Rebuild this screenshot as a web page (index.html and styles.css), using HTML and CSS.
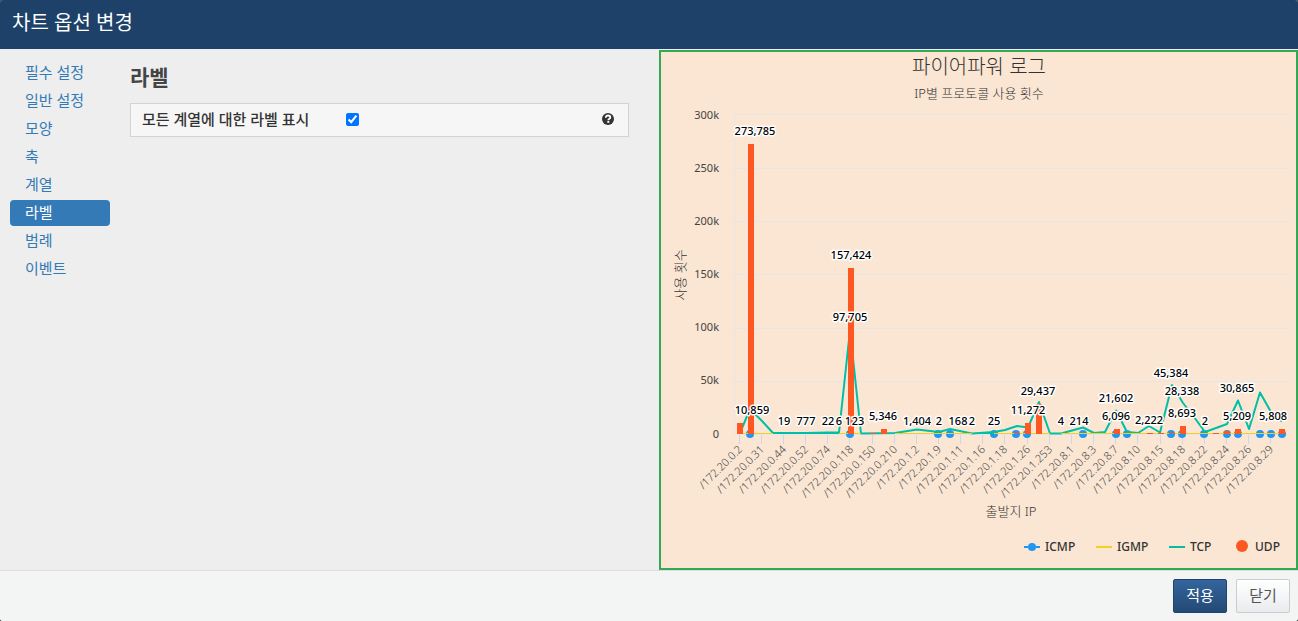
FILE: index.html
```html
<!DOCTYPE html>
<html lang="ko">
<head>
<meta charset="utf-8">
<title>차트 옵션 변경</title>
<link rel="stylesheet" href="styles.css">
</head>
<body>
<div class="dialog">
  <header class="dialog-header"><h1 class="dialog-title">차트 옵션 변경</h1></header>
  <main class="dialog-body">
    <div class="settings">
      <nav class="side-nav">
        <a class="nav-link" href="#required">필수 설정</a>
        <a class="nav-link" href="#general">일반 설정</a>
        <a class="nav-link" href="#shape">모양</a>
        <a class="nav-link" href="#axis">축</a>
        <a class="nav-link" href="#series">계열</a>
        <a class="nav-link active" href="#label" aria-current="page">라벨</a>
        <a class="nav-link" href="#legend">범례</a>
        <a class="nav-link" href="#event">이벤트</a>
      </nav>
      <section class="options">
        <h2 class="options-title">라벨</h2>
        <div class="option-row">
          <label class="option-label" for="show-labels">모든 계열에 대한 라벨 표시</label>
          <input class="option-check" id="show-labels" type="checkbox" checked>
          <button class="help" type="button" aria-label="도움말">
            <svg width="12" height="12" viewBox="0 0 12 12"><circle cx="6" cy="6" r="6" fill="#333"/><path d="M3.800 4.700C3.800 3.200 4.800 2.500 6.100 2.500C7.400 2.500 8.300 3.300 8.300 4.400C8.300 5.900 6.300 5.700 6.300 7.300" fill="none" stroke="#fff" stroke-width="1.800"/><rect x="5.300" y="8" width="2" height="1.800" fill="#fff"/></svg>
          </button>
        </div>
      </section>
    </div>
    <figure class="preview">
      <svg class="chart" viewBox="661 52 635 516" role="img" aria-label="파이어파워 로그">
        <text class="chart-title" x="979" y="74">파이어파워 로그</text>
        <text class="chart-subtitle" x="979" y="98">IP별 프로토콜 사용 횟수</text>

        <path class="grid" d="M734 114.500H1288M734 168.500H1288M734 221.500H1288M734 274.500H1288M734 328.500H1288M734 381.500H1288M734.500 114V434M734 434.500H1288"/>
        <path class="ticks" d="M739.500 435v9M761.500 435v9M783.500 435v9M805.500 435v9M827.500 435v9M849.500 435v9M872.500 435v9M894.500 435v9M916.500 435v9M938.500 435v9M960.500 435v9M982.500 435v9M1004.500 435v9M1027.500 435v9M1049.500 435v9M1071.500 435v9M1093.500 435v9M1115.500 435v9M1137.500 435v9M1160.500 435v9M1182.500 435v9M1204.500 435v9M1226.500 435v9M1248.500 435v9M1270.500 435v9"/>

        <g class="y-labels">
          <text x="719" y="119">300k</text><text x="719" y="172">250k</text><text x="719" y="225">200k</text><text x="719" y="278">150k</text><text x="719" y="331">100k</text><text x="719" y="384">50k</text><text x="719" y="438">0</text>
        </g>
        <text class="axis-title" transform="translate(685 275) rotate(-90)">사용 횟수</text>
        <text class="axis-title" x="1011" y="516">출발지 IP</text>

        <g class="icmp">
          <circle cx="750" cy="434" r="4"/><circle cx="850" cy="434" r="4"/><circle cx="938" cy="434" r="4"/><circle cx="950" cy="434" r="4"/><circle cx="994" cy="434" r="4"/><circle cx="1016" cy="434" r="4"/><circle cx="1027" cy="434" r="4"/><circle cx="1083" cy="434" r="4"/><circle cx="1116" cy="434" r="4"/><circle cx="1127" cy="434" r="4"/><circle cx="1171" cy="434" r="4"/><circle cx="1182" cy="434" r="4"/><circle cx="1204" cy="434" r="4"/><circle cx="1227" cy="434" r="4"/><circle cx="1238" cy="434" r="4"/><circle cx="1260" cy="434" r="4"/><circle cx="1271" cy="434" r="4"/><circle cx="1282" cy="434" r="4"/>
        </g>
        <path class="tcp" d="M740 433L750 409L762 421L773 433L806 433L828 432.500L839 432.500L850 330L861 433.500L895 433L917 429.500L939 432L950 429L972 433.500L994 432L1005 430L1017 426L1028 427.500L1039 402L1050 433.500L1061 433.500L1083 427.500L1094 433L1105 432L1116 410.500L1127 432L1138 433L1149 426L1160 432.500L1172 385L1183 403L1194 417L1205 432L1227 424L1238 400.500L1249 429L1260 392.500L1271 412L1282 421.500"/>
        <path class="igmp" d="M740 433.500H1282"/>
        <path class="tcp tcp-base" d="M773 433.500H839M861 433.500H895M972 433.500H994M1050 433.500H1061"/>
        <g class="udp">
          <rect x="737" y="423" width="6" height="11"/><rect x="748" y="144" width="6" height="290"/><rect x="848" y="268" width="6" height="166"/><rect x="870" y="433" width="6" height="1"/><rect x="881" y="429" width="6" height="5"/><rect x="1014" y="433" width="6" height="1"/><rect x="1025" y="423" width="6" height="11"/><rect x="1036" y="404" width="6" height="30"/><rect x="1114" y="429" width="6" height="5"/><rect x="1147" y="433" width="6" height="1"/><rect x="1158" y="433" width="6" height="1"/><rect x="1169" y="433" width="6" height="1"/><rect x="1180" y="426" width="6" height="8"/><rect x="1213" y="433" width="6" height="1"/><rect x="1224" y="431" width="6" height="3"/><rect x="1235" y="429" width="6" height="5"/><rect x="1279" y="429" width="6" height="5"/>
        </g>

        <g class="x-labels">
          <text transform="translate(743 450) rotate(-45)">/172.20.0.2</text>
          <text transform="translate(765 450) rotate(-45)">/172.20.0.31</text>
          <text transform="translate(787 450) rotate(-45)">/172.20.0.44</text>
          <text transform="translate(809 450) rotate(-45)">/172.20.0.52</text>
          <text transform="translate(831 450) rotate(-45)">/172.20.0.74</text>
          <text transform="translate(854 450) rotate(-45)">/172.20.0.118</text>
          <text transform="translate(876 450) rotate(-45)">/172.20.0.150</text>
          <text transform="translate(898 450) rotate(-45)">/172.20.0.210</text>
          <text transform="translate(920 450) rotate(-45)">/172.20.1.2</text>
          <text transform="translate(942 450) rotate(-45)">/172.20.1.9</text>
          <text transform="translate(964 450) rotate(-45)">/172.20.1.11</text>
          <text transform="translate(986 450) rotate(-45)">/172.20.1.16</text>
          <text transform="translate(1008 450) rotate(-45)">/172.20.1.18</text>
          <text transform="translate(1031 450) rotate(-45)">/172.20.1.26</text>
          <text transform="translate(1053 450) rotate(-45)">/172.20.1.253</text>
          <text transform="translate(1075 450) rotate(-45)">/172.20.8.1</text>
          <text transform="translate(1097 450) rotate(-45)">/172.20.8.3</text>
          <text transform="translate(1119 450) rotate(-45)">/172.20.8.7</text>
          <text transform="translate(1141 450) rotate(-45)">/172.20.8.10</text>
          <text transform="translate(1164 450) rotate(-45)">/172.20.8.15</text>
          <text transform="translate(1186 450) rotate(-45)">/172.20.8.18</text>
          <text transform="translate(1208 450) rotate(-45)">/172.20.8.22</text>
          <text transform="translate(1230 450) rotate(-45)">/172.20.8.24</text>
          <text transform="translate(1252 450) rotate(-45)">/172.20.8.26</text>
          <text transform="translate(1274 450) rotate(-45)">/172.20.8.29</text>
        </g>

        <g class="data-labels">
          <text x="755" y="135">273,785</text><text x="851" y="259">157,424</text><text x="850" y="321">97,705</text><text x="752" y="414">10,859</text>
          <text x="784" y="425">19</text><text x="806" y="425">777</text><text x="828" y="425">22</text><text x="839" y="425">6</text><text x="848" y="425">1</text><text x="858" y="425">23</text>
          <text x="883" y="420">5,346</text><text x="917" y="425">1,404</text><text x="939" y="425">2</text><text x="958" y="425">168</text><text x="972" y="425">2</text><text x="994" y="425">25</text>
          <text x="1028" y="414">11,272</text><text x="1038" y="395">29,437</text><text x="1061" y="425">4</text><text x="1079" y="425">214</text>
          <text x="1116" y="402">21,602</text><text x="1116" y="420">6,096</text><text x="1149" y="424">2,222</text><text x="1171" y="377">45,384</text><text x="1182" y="395">28,338</text><text x="1182" y="417">8,693</text><text x="1205" y="425">2</text>
          <text x="1237" y="392">30,865</text><text x="1237" y="420">5,209</text><text x="1273" y="420">5,808</text>
        </g>

        <g class="legend">
          <path d="M1024 547H1040" stroke="#2196f3" stroke-width="2"/><circle cx="1032" cy="547" r="4" fill="#2196f3"/><text x="1045" y="551">ICMP</text>
          <path d="M1096 547H1112" stroke="#f9ce1d" stroke-width="2"/><text x="1117" y="551">IGMP</text>
          <path d="M1169 547H1185" stroke="#00bfa5" stroke-width="2"/><text x="1190" y="551">TCP</text>
          <circle cx="1242" cy="546" r="6" fill="#ff5722"/><text x="1255" y="551">UDP</text>
        </g>
      </svg>
    </figure>
  </main>
  <footer class="dialog-footer">
    <button class="btn btn-primary" type="button">적용</button>
    <button class="btn" type="button">닫기</button>
  </footer>
</div>
</body>
</html>
```
FILE: styles.css
```css
* { box-sizing: border-box; }
html { background: #333; }
body { margin: 0; font-family: "Noto Sans", "Noto Sans CJK KR", sans-serif; font-size: 15px; line-height: 20px; color: #333; }
.dialog { display: flex; flex-direction: column; min-height: 100vh; border-radius: 3px; overflow: hidden; background: #eee; }
.dialog-header { display: flex; align-items: center; height: 49px; padding: 0 12px 4px; background: #1d4168; color: #fff; }
.dialog-title { margin: 0; font-size: 20px; line-height: 28px; font-weight: 400; }
.dialog-body { display: grid; grid-template-columns: 659fr 639fr; flex: 1; }
.settings { display: flex; gap: 20px; padding: 11px 30px 12px 10px; }
.side-nav { display: flex; flex-direction: column; gap: 2px; flex: 0 0 100px; }
.nav-link { height: 26px; padding: 0 15px; border-radius: 4px; line-height: 24px; color: #337ab7; text-decoration: none; }
.nav-link.active { background: #337ab7; color: #fff; }
.options { flex: 1; }
.options-title { margin: 4px 0 12px; font-size: 21px; line-height: 27px; font-weight: 700; color: #444; }
.option-row { display: flex; align-items: center; height: 34px; padding: 0 14px 2px 11px; border: 1px solid #d3d3d3; background: #f6f6f6; }
.option-label { flex: 0 0 204px; font-weight: 500; }
.option-check { width: 13px; height: 13px; margin: 0; accent-color: #0075ff; }
.help { display: flex; margin-left: auto; padding: 0; border: 0; background: none; }

.preview { margin: 1px 0 0; border: 2px solid #34a853; background: #fae6d3; }
.chart { display: block; width: 100%; height: auto; }
.chart-title { font-size: 20px; font-weight: 300; fill: #333; text-anchor: middle; }
.chart-subtitle, .axis-title { font-size: 13px; font-weight: 300; fill: #333; text-anchor: middle; }
.grid { fill: none; stroke: #e6e6e6; }
.ticks { fill: none; stroke: #ccd6eb; }
.y-labels, .x-labels { font-size: 11px; fill: #444; text-anchor: end; }
.x-labels { font-weight: 300; }
.icmp { fill: #2196f3; }
.igmp { fill: none; stroke: #f9ce1d; }
.tcp { fill: none; stroke: #00bfa5; stroke-width: 2; stroke-linejoin: round; }
.tcp-base { stroke-width: 1; }
.udp { fill: #ff5722; }
.data-labels { font-size: 11px; font-weight: 500; fill: #000; stroke: #fff; stroke-width: 3px; stroke-linejoin: round; paint-order: stroke; text-anchor: middle; }
.legend { font-size: 12px; font-weight: 500; fill: #333; }

.dialog-footer { display: flex; justify-content: flex-end; gap: 9px; padding: 8px; border-top: 1px solid #ddd; background: #f3f4f4; }
.btn { width: 54px; height: 34px; padding: 0 0 2px; border: 1px solid #ccc; border-radius: 2px; background: linear-gradient(#fff, #e9ecef); color: #555; font: inherit; }
.btn-primary { border-color: #20446c; background: linear-gradient(#34659d, #234a76); color: #fff; }
```
